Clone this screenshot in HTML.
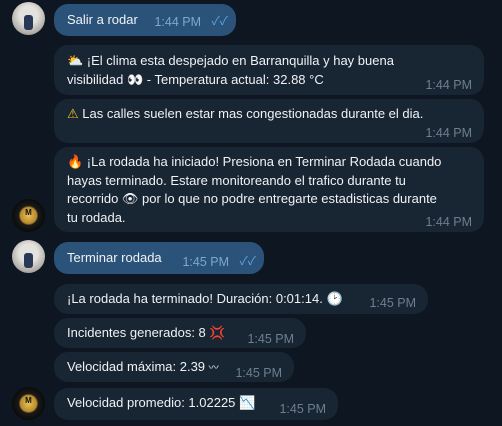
<!DOCTYPE html>
<html><head><meta charset="utf-8"><style>
*{margin:0;padding:0;box-sizing:border-box}
body{width:502px;height:426px;background:#0e1621;font-family:"Liberation Sans","Noto Sans CJK JP",sans-serif;font-size:13px;color:#f0f2f5;position:relative;overflow:hidden}
.b{position:absolute;left:54px;background:#182533;border-radius:14px;padding:0 13px;line-height:18px}
.o{background:#2b5278}
.t{position:absolute;right:12px;color:#6d7f8f;font-size:12.5px}
.o .t{color:#7da8d3}
.av{position:absolute;left:12px;width:33px;height:33px;border-radius:50%}
.u{background:radial-gradient(circle at 50% 40%,#e4e2de 35%,#b0aca6 70%,#6a6560)}
.u:after{content:"";position:absolute;left:12px;top:13px;width:9px;height:15px;background:#2a3858;border-radius:3px}
.m{background:radial-gradient(circle,#e9c25a 0,#b88a2a 35%,#1a1a1a 42%,#0b0b0b 70%)}
.m:after{content:"M";position:absolute;left:0;right:0;top:9px;text-align:center;font-size:8px;font-weight:bold;color:#111}
.e{font-family:"DejaVu Sans",sans-serif;font-size:13px}
</style></head><body>
<div class="av u" style="top:2px"></div>
<div class="b o" style="top:4px;width:182px;height:32px;padding-top:7px">Salir a rodar<span class="t" style="top:9px;right:35px;color:#7da8d3">1:44 PM</span><span style="position:absolute;right:8px;top:8px;color:#5ea5e6;font-size:12px">✓✓</span></div>

<div class="b" style="top:45px;width:430px;height:50px;padding-top:7px"><span class="e">⛅</span> ¡El clima esta despejado en Barranquilla y hay buena<br>visibilidad <span class="e">👀</span> - Temperatura actual: 32.88 °C<span class="t" style="top:31px">1:44 PM</span></div>

<div class="b" style="top:99px;width:430px;height:44px;padding-top:6px"><span class="e" style="color:#f5c518">⚠</span> Las calles suelen estar mas congestionadas durante el dia.<span class="t" style="top:25px">1:44 PM</span></div>

<div class="b" style="top:147px;width:430px;height:85px;padding-top:6px"><span class="e" style="color:#f26b1d">🔥</span> ¡La rodada ha iniciado! Presiona en Terminar Rodada cuando<br>hayas terminado. Estare monitoreando el trafico durante tu<br>recorrido <span class="e">👁</span> por lo que no podre entregarte estadisticas durante<br>tu rodada.<span class="t" style="top:66px">1:44 PM</span></div>
<div class="av m" style="top:199px"></div>

<div class="av u" style="top:240px"></div>
<div class="b o" style="top:242px;width:210px;height:32px;padding-top:7px">Terminar rodada<span class="t" style="top:11px;right:35px;color:#7da8d3">1:45 PM</span><span style="position:absolute;right:8px;top:10px;color:#5ea5e6;font-size:12px">✓✓</span></div>

<div class="b" style="top:284px;width:374px;height:30px;padding-top:6px">¡La rodada ha terminado! Duración: 0:01:14. <span class="e">🕑</span><span class="t" style="top:10px">1:45 PM</span></div>
<div class="b" style="top:318px;width:252px;height:30px;padding-top:6px">Incidentes generados: 8 <span class="e" style="color:#e0303a">💢</span><span class="t" style="top:12px">1:45 PM</span></div>
<div class="b" style="top:352px;width:240px;height:30px;padding-top:6px">Velocidad máxima: 2.39 <span style="font-size:10px">〰</span><span class="t" style="top:12px">1:45 PM</span></div>
<div class="av m" style="top:387px"></div>
<div class="b" style="top:388px;width:284px;height:32px;padding-top:6px">Velocidad promedio: 1.02225 <span class="e">📉</span><span class="t" style="top:12px">1:45 PM</span></div>
</body></html>
